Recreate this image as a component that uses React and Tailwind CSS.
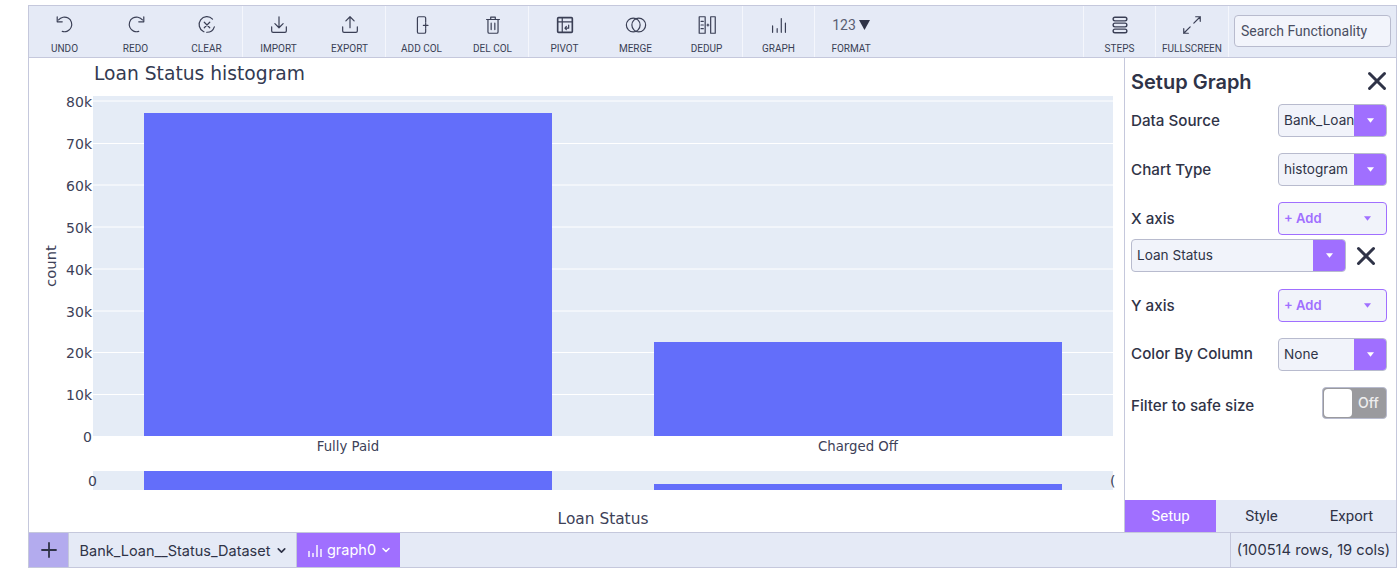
import { ChevronDown, X, Plus } from 'lucide-react';

const stroke = { fill: 'none', stroke: '#3a3f55', strokeWidth: 1.3, strokeLinecap: 'round', strokeLinejoin: 'round' };

const icons = {
  undo: <g {...stroke}><path d="M5 6.500 A8 8 0 1 1 9 19" /><path d="M3.500 3v5.500h5.500" /></g>,
  redo: <g {...stroke}><path d="M19 6.500 A8 8 0 1 0 15 19" /><path d="M20.500 3v5.500H15" /></g>,
  clear: <g {...stroke}><path d="M18 5.500A8.500 8.500 0 1 0 20 14" strokeDasharray="30 3" /><path d="M9 9l6 6M15 9l-6 6" /></g>,
  import: <g {...stroke}><path d="M12 3v12M7.500 10.500L12 15l4.500-4.500" /><path d="M4 14v4.500a1.500 1.500 0 0 0 1.500 1.500h13a1.500 1.500 0 0 0 1.500-1.500V14" /></g>,
  export: <g {...stroke}><path d="M12 15V3M7.500 7.500L12 3l4.500 4.500" /><path d="M4 14v4.500a1.500 1.500 0 0 0 1.500 1.500h13a1.500 1.500 0 0 0 1.500-1.500V14" /></g>,
  addcol: <g {...stroke}><path d="M16 9V4.500A1.500 1.500 0 0 0 14.500 3h-6A1.500 1.500 0 0 0 7 4.500v15A1.500 1.500 0 0 0 8.500 21h6a1.500 1.500 0 0 0 1.500-1.500V16" /><path d="M16 10v5M13.500 12.500h5" /></g>,
  delcol: <g {...stroke}><path d="M5 6h14M9.500 6V3.500h5V6M6.500 6v13.500A1.500 1.500 0 0 0 8 21h8a1.500 1.500 0 0 0 1.500-1.500V6M10 10v7M14 10v7" /></g>,
  pivot: <g {...stroke}><rect x="4" y="4" width="16" height="16" rx="1" strokeWidth="1.800" /><path d="M4 8.500h16M9 4v16" /><path d="M16 12v3.500h-4M13.500 13.500L12 15.500l1.500 1.500" /></g>,
  merge: <g {...stroke}><circle cx="9" cy="12" r="7.500" /><circle cx="15" cy="12" r="7.500" /></g>,
  dedup: <g {...stroke}><rect x="3.500" y="3" width="6.500" height="18" /><rect x="16" y="3" width="5" height="18" /><path d="M5.500 8h2.500M5.500 12h2.500M5.500 16h2.500M12 12h2M13 11v2" /></g>,
  graph: <g {...stroke}><path d="M5 13v7M10 16v4M14.500 5v15M19 10v10" /></g>,
  steps: <g {...stroke} strokeWidth="1.500"><rect x="4.500" y="3.500" width="15" height="4" rx="2" /><rect x="4.500" y="10" width="15" height="4" rx="2" /><rect x="4.500" y="16.500" width="15" height="4" rx="2" /></g>,
  fullscreen: <g {...stroke}><path d="M14 10l7-7M16 3h5v5M10 14l-7 7M3 16v5h5" /></g>,
};

const Icon = ({ name }) => (
  <svg viewBox="0 0 24 24" className="w-[22px] h-[22px]">{icons[name]}</svg>
);

const ToolItem = ({ icon, label, width = 'w-[71px]' }) => (
  <div className={`${width} h-full flex flex-col items-center pt-[7px] shrink-0`}>
    <div className="h-[24px] flex items-center justify-center"><Icon name={icon} /></div>
    <span className="mt-[6px] text-[10px] leading-[12px] text-[#3a3f55] font-['Roboto',sans-serif]">{label}</span>
  </div>
);

const Group = ({ children, last }) => (
  <div className={`flex h-full ${last ? '' : 'border-r border-[#f4f6fc]'}`}>{children}</div>
);

const Toolbar = () => (
  <div className="h-[52px] shrink-0 flex items-stretch bg-[#e5eaf6] border-b border-[#c5c8dc]">
    <Group><ToolItem icon="undo" label="UNDO" /><ToolItem icon="redo" label="REDO" /><ToolItem icon="clear" label="CLEAR" /></Group>
    <Group><ToolItem icon="import" label="IMPORT" /><ToolItem icon="export" label="EXPORT" /></Group>
    <Group><ToolItem icon="addcol" label="ADD COL" /><ToolItem icon="delcol" label="DEL COL" /></Group>
    <Group><ToolItem icon="pivot" label="PIVOT" /><ToolItem icon="merge" label="MERGE" /><ToolItem icon="dedup" label="DEDUP" /></Group>
    <Group><ToolItem icon="graph" label="GRAPH" /></Group>
    <div className="w-[72px] h-full flex flex-col items-center pt-[7px] shrink-0">
      <div className="h-[24px] flex items-center text-[14px] text-[#5a5e72] font-['Roboto',sans-serif]">
        123
        <svg viewBox="0 0 10 9" className="w-[11px] h-[10px] ml-[3px]"><path d="M0 0h10L5 9z" fill="#2f3347" /></svg>
      </div>
      <span className="mt-[6px] text-[10px] leading-[12px] text-[#3a3f55] font-['Roboto',sans-serif]">FORMAT</span>
    </div>
    <div className="flex-1" />
    <div className="flex h-full border-l border-[#f4f6fc]">
      <Group><ToolItem icon="steps" label="STEPS" /></Group>
      <Group><ToolItem icon="fullscreen" label="FULLSCREEN" width="w-[72px]" /></Group>
    </div>
    <div className="pl-[5px] pr-[5px] pt-[9px]">
      <div className="w-[157px] h-[32px] bg-[#f2f4fb] border border-[#b8bbce] rounded-[4px] flex items-center pl-[6px] text-[14px] text-[#4a4e62] font-['Roboto',sans-serif]">
        Search Functionality
      </div>
    </div>
  </div>
);

const yTicks = [
  ['80k', 101], ['70k', 143.500], ['60k', 185], ['50k', 227], ['40k', 269],
  ['30k', 311], ['20k', 352.500], ['10k', 394.500], ['0', 436],
];

const Chart = () => (
  <svg viewBox="0 0 1095 474" className="w-[1095px] h-[474px] block" style={{ fontFamily: '"DejaVu Sans", sans-serif' }}>
    <g transform="translate(-29,-58)">
      <text x="94" y="80" fontSize="18.700" fill="#333a52">Loan Status histogram</text>
      <rect x="93" y="96" width="1020" height="340" fill="#e5ecf6" />
      {yTicks.map(([label, y]) => (
        <g key={label}>
          {label !== '0' && <line x1="93" x2="1113" y1={y} y2={y} stroke="#ffffff" />}
          <text x="92" y={y + 5.500} fontSize="14" textAnchor="end" fill="#3d4158">{label}</text>
        </g>
      ))}
      <rect x="144" y="113" width="408" height="323" fill="#636efa" />
      <rect x="654" y="342" width="408" height="94" fill="#636efa" />
      <text x="348" y="451" fontSize="13.300" textAnchor="middle" fill="#3d4158">Fully Paid</text>
      <text x="858" y="451" fontSize="13.300" textAnchor="middle" fill="#3d4158">Charged Off</text>
      <text transform="translate(56,266) rotate(-90)" fontSize="14.800" textAnchor="middle" fill="#3d4158">count</text>
      <rect x="93" y="471" width="1020" height="19" fill="#e5ecf6" />
      <text x="88" y="486" fontSize="14" fill="#3d4158">0</text>
      <text x="1110" y="486" fontSize="14" fill="#3d4158">(</text>
      <rect x="144" y="471" width="408" height="19" fill="#636efa" />
      <rect x="654" y="484" width="408" height="6" fill="#636efa" />
      <text x="603" y="524" fontSize="15.400" textAnchor="middle" fill="#3d4158">Loan Status</text>
    </g>
  </svg>
);

const Caret = ({ color = 'text-white' }) => (
  <svg viewBox="0 0 8 5" className={`w-[7px] h-[5px] ${color}`}><path d="M0 0h8L4 5z" fill="currentColor" /></svg>
);

const Select = ({ value, width = 'w-[109px]' }) => (
  <div className={`${width} h-[33px] flex rounded-[4px] border border-[#b8bbce] overflow-hidden bg-[#f1f3fa]`}>
    <div className="flex-1 min-w-0 pl-[5px] flex items-center text-[13.600px] text-[#2f3347] overflow-hidden whitespace-nowrap">{value}</div>
    <div className="w-[32px] shrink-0 bg-[#a06fff] flex items-center justify-center"><Caret /></div>
  </div>
);

const AddSelect = () => (
  <div className="w-[109px] h-[33px] flex items-center justify-between pl-[5px] pr-[15px] rounded-[4px] border border-[#a06fff] bg-[#f1f3fa] text-[13px] font-semibold text-[#a06fff]">
    + Add
    <Caret color="text-[#a06fff]" />
  </div>
);

const Row = ({ label, className = 'mt-[16px]', labelClass = 'mt-[1px]', children }) => (
  <div className={`h-[33px] flex items-center justify-between ${className}`}>
    <span className={`text-[15.200px] font-medium text-[#2f3347] ${labelClass}`}>{label}</span>
    {children}
  </div>
);

const SidePanel = () => (
  <div className="w-[272px] shrink-0 flex flex-col border-l border-[#c5c8dc] bg-white font-['Inter',sans-serif]">
    <div className="flex-1 pl-[6px] pr-[9px]">
      <div className="h-[46px] flex items-center justify-between">
        <span className="text-[20px] font-semibold text-[#2f3347] mt-[2px]">Setup Graph</span>
        <X size={30} strokeWidth={2.400} className="text-[#2f3347] mr-[-5px]" />
      </div>
      <Row label="Data Source" className=""><Select value="Bank_Loan_Status_Dataset" /></Row>
      <Row label="Chart Type"><Select value="histogram" /></Row>
      <Row label="X axis"><AddSelect /></Row>
      <div className="h-[33px] mt-[4px] flex items-center">
        <Select value="Loan Status" width="w-[215px]" />
        <X size={30} strokeWidth={2.400} className="text-[#2f3347] ml-[5px]" />
      </div>
      <Row label="Y axis" className="mt-[17px]"><AddSelect /></Row>
      <Row label="Color By Column" labelClass=""><Select value="None" /></Row>
      <Row label="Filter to safe size" className="mt-[15px]" labelClass="mt-[7px]">
        <div className="w-[65px] h-[32px] rounded-[4px] bg-[#9a9a9e] border border-[#b8bbce] flex items-center p-[1px]">
          <div className="w-[28px] h-full bg-white rounded-[4px]" />
          <span className="flex-1 text-center text-[14px] font-medium text-[#eeeeee]">Off</span>
        </div>
      </Row>
    </div>
    <div className="h-[32px] flex bg-[#e5eaf6] text-[15px] font-['Roboto',sans-serif]">
      <div className="w-[91px] bg-[#a06fff] text-white flex items-center justify-center">Setup</div>
      <div className="w-[91px] text-[#2f3347] flex items-center justify-center">Style</div>
      <div className="flex-1 text-[#2f3347] flex items-center justify-center">Export</div>
    </div>
  </div>
);

const BottomBar = () => (
  <div className="h-[35px] shrink-0 flex bg-[#e5eaf6] border-t border-[#c5c8dc] font-['Inter',sans-serif] text-[14.500px] text-[#2f3347]">
    <div className="w-[40px] bg-[#b3abee] flex items-center justify-center border-r border-[#c5c8dc]"><Plus size={24} strokeWidth={1.800} className="text-[#2f3347]" /></div>
    <div className="w-[228px] flex items-center justify-center gap-[5px] border-r border-[#c5c8dc] pl-[3px] pt-[1px]">
      Bank_Loan__Status_Dataset
      <ChevronDown size={13} strokeWidth={3} />
    </div>
    <div className="w-[103px] bg-[#a06fff] text-white flex items-center justify-center gap-[4px] pl-[2px]">
      <svg viewBox="0 0 16 16" className="w-[16px] h-[16px]"><path d="M2 9v6M6 11v4M10 3v12M14 7v8" stroke="#ffffff" strokeWidth="1.400" fill="none" /></svg>
      graph0
      <ChevronDown size={12} strokeWidth={3} />
    </div>
    <div className="flex-1" />
    <div className="w-[166px] border-l border-[#c5c8dc] flex items-center justify-center whitespace-nowrap text-[14.700px] pt-[1px]">(100514 rows, 19 cols)</div>
  </div>
);

export default function App() {
  return (
    <div className="w-[1400px] h-[578px] bg-white pl-[28px] pr-[3px] pt-[5px] pb-[10px]">
      <div className="h-full flex flex-col border border-[#c5c8dc]">
        <Toolbar />
        <div className="flex-1 min-h-0 flex">
          <div className="flex-1 min-w-0 bg-white overflow-hidden"><Chart /></div>
          <SidePanel />
        </div>
        <BottomBar />
      </div>
    </div>
  );
}
